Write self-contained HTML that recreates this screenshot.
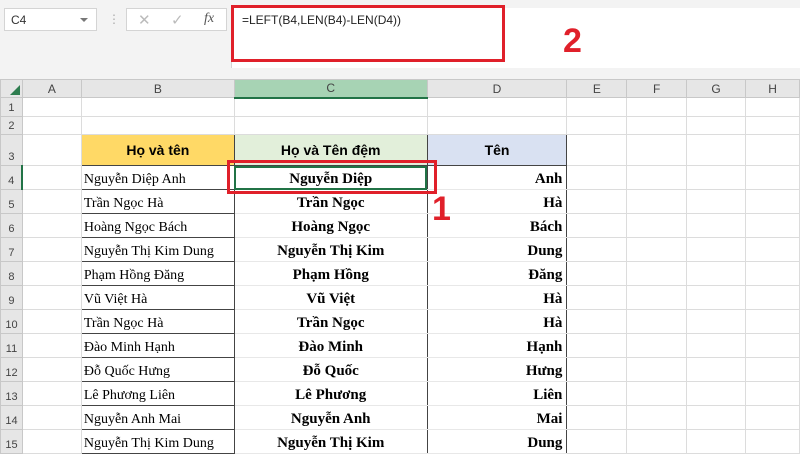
<!DOCTYPE html>
<html><head><meta charset="utf-8"><style>
*{margin:0;padding:0;box-sizing:border-box}
body{width:800px;height:450px;overflow:hidden;background:#fff;position:relative;font-family:"Liberation Sans",sans-serif}
.top{position:absolute;left:0;top:0;width:800px;height:79px;background:#f3f3f3}
.nb{position:absolute;left:4px;top:8px;width:93px;height:23px;background:#fff;border:1px solid #d4d4d4;font-size:12px;color:#333;padding:4px 6px}
.nb:after{content:"";position:absolute;right:8px;top:9px;border:4px solid transparent;border-top:4px solid #777}
.ic{position:absolute;left:126px;top:8px;width:101px;height:23px;background:#fff;border:1px solid #d4d4d4;color:#bbb;font-size:15px}
.fb{position:absolute;left:231px;top:8px;width:569px;height:60px;background:#fff;border-left:1px solid #d4d4d4}
.fx{position:absolute;left:242px;top:13px;font-size:12px;color:#222}
.r1{position:absolute;left:231px;top:5px;width:274px;height:57px;border:3px solid #e0202a}
.r2{position:absolute;left:227px;top:160px;width:210px;height:34px;border:3px solid #e0202a}
.n{position:absolute;color:#e0202a;font-weight:bold;font-size:34px}
table{position:absolute;left:0;top:79px;border-collapse:collapse;table-layout:fixed}
td{border:1px solid #dcdcdc;font-family:"Liberation Serif",serif;font-size:14px;white-space:nowrap;overflow:hidden;padding:0 2px 1px;vertical-align:bottom}
tr.h td{background:#e6e6e6;font-family:"Liberation Sans",sans-serif;font-size:12px;color:#444;text-align:center;border-color:#c8c8c8;vertical-align:middle;padding:0}
td.rh{background:#e6e6e6;font-family:"Liberation Sans",sans-serif;font-size:11px;color:#444;text-align:center;border-color:#c8c8c8;vertical-align:bottom;padding-bottom:2px}
td.b{border:1px solid #444}
td.c{text-align:center;font-weight:bold;font-size:15px;border-left:1px solid #444;border-right:1px solid #444;border-bottom-color:#e8e8e8}
td.d{text-align:right;font-weight:bold;font-size:15px;border-right:1px solid #444;border-bottom-color:#e8e8e8;padding-right:4px}
tr.t td.x{font-family:"Liberation Sans",sans-serif;font-weight:bold;font-size:14px;text-align:center;border:1px solid #444;vertical-align:middle}
</style></head><body>
<div class="top"></div>
<div class="nb">C4</div>
<div style="position:absolute;left:108px;top:12px;color:#aaa;font-size:12px">⋮</div>
<div class="ic"><span style="position:absolute;left:11px;top:2px">✕</span><span style="position:absolute;left:44px;top:2px">✓</span><span style="position:absolute;left:77px;top:2px;color:#555;font-style:italic;font-family:'Liberation Serif',serif;font-size:14px">fx</span></div>
<div class="fb"></div>
<div class="fx">=LEFT(B4,LEN(B4)-LEN(D4))</div>
<div class="r1"></div>
<div class="n" style="left:563px;top:22px">2</div>
<table>
<colgroup><col style="width:22px"><col style="width:59px"><col style="width:153px"><col style="width:193px"><col style="width:140px"><col style="width:60px"><col style="width:60px"><col style="width:59px"><col style="width:54px"></colgroup>
<tr class="h" style="height:18px"><td style="position:relative"><span style="position:absolute;right:2px;bottom:2px;border-left:10px solid transparent;border-bottom:10px solid #2e7d4f"></span></td><td>A</td><td>B</td><td style="background:#a7d3b4;border-bottom:2px solid #217346">C</td><td>D</td><td>E</td><td>F</td><td>G</td><td>H</td></tr>
<tr style="height:19px"><td class="rh">1</td><td></td><td></td><td></td><td></td><td></td><td></td><td></td><td></td></tr>
<tr style="height:18px"><td class="rh">2</td><td></td><td></td><td></td><td></td><td></td><td></td><td></td><td></td></tr>
<tr class="t" style="height:31px"><td class="rh">3</td><td></td><td class="x" style="background:#ffd966">Họ và tên</td><td class="x" style="background:#e2efda">Họ và Tên đệm</td><td class="x" style="background:#d9e1f2">Tên</td><td></td><td></td><td></td><td></td></tr>
<tr style="height:24px"><td class="rh" style="border-right:2px solid #217346">4</td><td></td><td class="b">Nguyễn Diệp Anh</td><td class="c" style="outline:2px solid #217346;outline-offset:-2px">Nguyễn Diệp</td><td class="d">Anh</td><td></td><td></td><td></td><td></td></tr>
<tr style="height:24px"><td class="rh">5</td><td></td><td class="b">Trần Ngọc Hà</td><td class="c">Trần Ngọc</td><td class="d">Hà</td><td></td><td></td><td></td><td></td></tr>
<tr style="height:24px"><td class="rh">6</td><td></td><td class="b">Hoàng Ngọc Bách</td><td class="c">Hoàng Ngọc</td><td class="d">Bách</td><td></td><td></td><td></td><td></td></tr>
<tr style="height:24px"><td class="rh">7</td><td></td><td class="b">Nguyễn Thị Kim Dung</td><td class="c">Nguyễn Thị Kim</td><td class="d">Dung</td><td></td><td></td><td></td><td></td></tr>
<tr style="height:24px"><td class="rh">8</td><td></td><td class="b">Phạm Hồng Đăng</td><td class="c">Phạm Hồng</td><td class="d">Đăng</td><td></td><td></td><td></td><td></td></tr>
<tr style="height:24px"><td class="rh">9</td><td></td><td class="b">Vũ Việt Hà</td><td class="c">Vũ Việt</td><td class="d">Hà</td><td></td><td></td><td></td><td></td></tr>
<tr style="height:24px"><td class="rh">10</td><td></td><td class="b">Trần Ngọc Hà</td><td class="c">Trần Ngọc</td><td class="d">Hà</td><td></td><td></td><td></td><td></td></tr>
<tr style="height:24px"><td class="rh">11</td><td></td><td class="b">Đào Minh Hạnh</td><td class="c">Đào Minh</td><td class="d">Hạnh</td><td></td><td></td><td></td><td></td></tr>
<tr style="height:24px"><td class="rh">12</td><td></td><td class="b">Đỗ Quốc Hưng</td><td class="c">Đỗ Quốc</td><td class="d">Hưng</td><td></td><td></td><td></td><td></td></tr>
<tr style="height:24px"><td class="rh">13</td><td></td><td class="b">Lê Phương Liên</td><td class="c">Lê Phương</td><td class="d">Liên</td><td></td><td></td><td></td><td></td></tr>
<tr style="height:24px"><td class="rh">14</td><td></td><td class="b">Nguyễn Anh Mai</td><td class="c">Nguyễn Anh</td><td class="d">Mai</td><td></td><td></td><td></td><td></td></tr>
<tr style="height:24px"><td class="rh">15</td><td></td><td class="b">Nguyễn Thị Kim Dung</td><td class="c">Nguyễn Thị Kim</td><td class="d">Dung</td><td></td><td></td><td></td><td></td></tr>
</table>
<div class="r2"></div>
<div class="n" style="left:432px;top:190px">1</div>
</body></html>
